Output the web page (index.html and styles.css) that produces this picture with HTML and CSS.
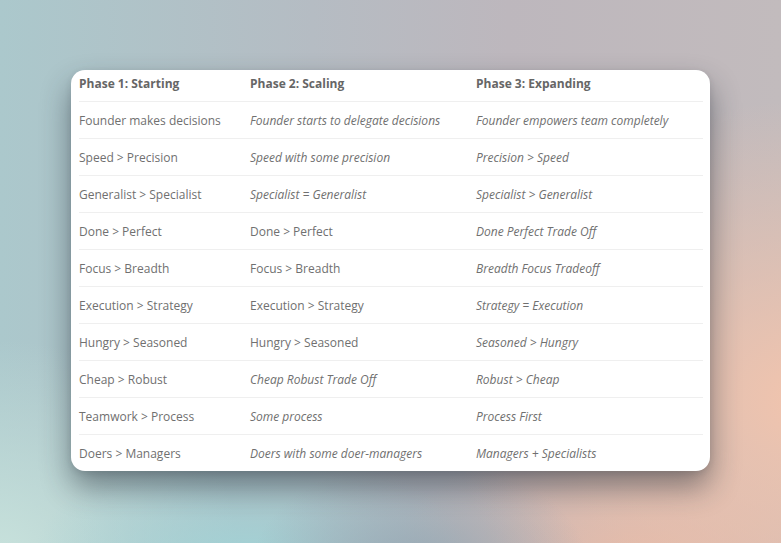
FILE: index.html
```html
<!DOCTYPE html>
<html>
<head>
<meta charset="utf-8">
<link rel="stylesheet" href="styles.css">
</head>
<body>
<div class="stage">
  <div class="card">
    <table class="grid">
      <thead>
        <tr><th>Phase 1: Starting</th><th>Phase 2: Scaling</th><th>Phase 3: Expanding</th></tr>
      </thead>
      <tbody>
        <tr><td>Founder makes decisions</td><td class="i">Founder starts to delegate decisions</td><td class="i">Founder empowers team completely</td></tr>
        <tr><td>Speed &gt; Precision</td><td class="i">Speed with some precision</td><td class="i">Precision &gt; Speed</td></tr>
        <tr><td>Generalist &gt; Specialist</td><td class="i">Specialist = Generalist</td><td class="i">Specialist &gt; Generalist</td></tr>
        <tr><td>Done &gt; Perfect</td><td>Done &gt; Perfect</td><td class="i">Done Perfect Trade Off</td></tr>
        <tr><td>Focus &gt; Breadth</td><td>Focus &gt; Breadth</td><td class="i">Breadth Focus Tradeoff</td></tr>
        <tr><td>Execution &gt; Strategy</td><td>Execution &gt; Strategy</td><td class="i">Strategy = Execution</td></tr>
        <tr><td>Hungry &gt; Seasoned</td><td>Hungry &gt; Seasoned</td><td class="i">Seasoned &gt; Hungry</td></tr>
        <tr><td>Cheap &gt; Robust</td><td class="i">Cheap Robust Trade Off</td><td class="i">Robust &gt; Cheap</td></tr>
        <tr><td>Teamwork &gt; Process</td><td class="i">Some process</td><td class="i">Process First</td></tr>
        <tr><td>Doers &gt; Managers</td><td class="i">Doers with some doer-managers</td><td class="i">Managers + Specialists</td></tr>
      </tbody>
    </table>
  </div>
</div>
</body>
</html>
```
FILE: styles.css
```css
html, body {
  margin: 0;
  padding: 0;
  width: 781px;
  height: 543px;
  overflow: hidden;
}
body {
  font-family: "Open Sans", "Liberation Sans", sans-serif;
  background:
    radial-gradient(ellipse 170px 110px at 420px 570px, rgba(150,168,180,1) 0%, rgba(150,168,180,0) 100%),
    radial-gradient(ellipse 220px 130px at 250px 570px, rgba(160,212,215,1) 0%, rgba(160,212,215,0) 100%),
    radial-gradient(ellipse 360px 300px at 810px 400px, rgba(242,196,173,1) 0%, rgba(242,196,173,0) 100%),
    radial-gradient(ellipse 250px 130px at 640px 560px, rgba(225,184,168,1) 0%, rgba(225,184,168,0) 100%),
    radial-gradient(ellipse 240px 220px at 0px 560px, rgba(200,226,220,1) 0%, rgba(200,226,220,0) 100%),
    linear-gradient(90deg, #abc8cc 0%, #b5bcc3 40%, #bdb7bd 65%, #c2bbbd 100%);
}
.stage {
  padding: 70px 71px 0 71px;
}
.card {
  background: #fff;
  border-radius: 14px;
  padding: 0 7px 0 8px;
  box-shadow: 0 16px 30px rgba(30, 40, 50, 0.48), 0 2px 6px rgba(40, 50, 60, 0.12);
}
.grid {
  width: 624px;
  border-collapse: collapse;
  table-layout: fixed;
}
.grid th:nth-child(1), .grid td:nth-child(1) { width: 171px; }
.grid th:nth-child(2), .grid td:nth-child(2) { width: 226px; }
.grid th {
  text-align: left;
  font-weight: 700;
  font-size: 12px;
  color: #666;
  height: 26px;
  padding: 0 0 5px 0;
  vertical-align: middle;
  border-bottom: 1px solid #efefef;
  white-space: nowrap;
}
.grid td {
  font-size: 12px;
  color: #707070;
  height: 36px;
  padding: 0;
  vertical-align: middle;
  border-bottom: 1px solid #efefef;
  white-space: nowrap;
}
.grid tbody tr:last-child td {
  border-bottom: none;
}
.grid td.i {
  font-style: italic;
}
```
